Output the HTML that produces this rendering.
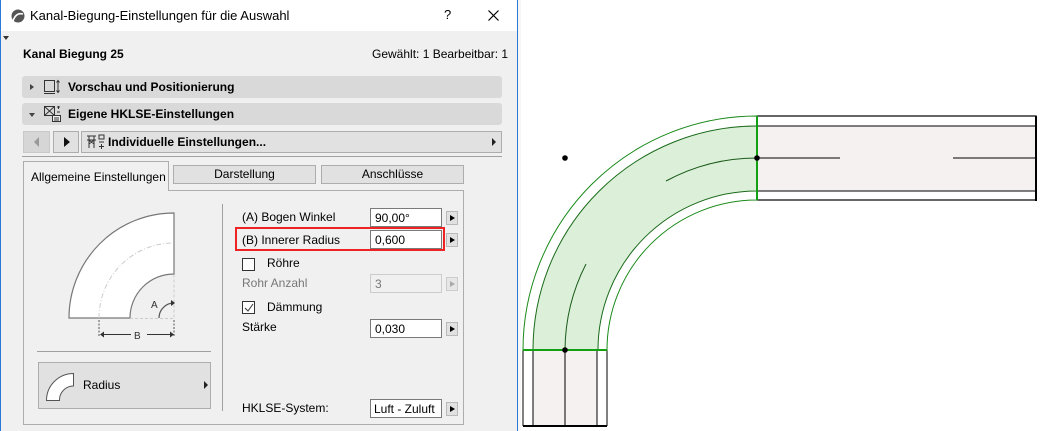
<!DOCTYPE html>
<html><head><meta charset="utf-8"><style>
*{box-sizing:border-box;margin:0;padding:0}
body{width:1041px;height:431px;overflow:hidden;background:#fff;font-family:"Liberation Sans",sans-serif;font-size:12px;color:#000;position:relative}
.a{position:absolute;white-space:nowrap}
.dlg{left:0;top:0;width:518px;height:431px;background:#f0f0f0;border-left:1px solid #2b79d6;border-right:1px solid #2b79d6}
.bar{background:#d9d9d9;border-radius:3px;height:22px;left:21px;width:480px;font-weight:bold}
.inp{background:#fff;border:1px solid #7a7a7a;height:19px;width:72px;left:369px;padding:2px 4px;font-size:12px}
.btn{left:445px;width:12px;height:14px;background:#e1e1e1;border:1px solid #adadadc0}
.btn:after{content:"";position:absolute;left:3px;top:3px;border-left:5px solid #000;border-top:3.5px solid transparent;border-bottom:3.5px solid transparent}
.lbl{left:241px}
.cb{left:241px;width:13px;height:13px;border:1px solid #333;background:#fff}
.tab{background:#e1e1e1;border:1px solid #adadad;height:19px;text-align:center;line-height:17px}
</style></head><body>
<div class="a dlg">
 <div class="a" style="left:0;top:0;width:516px;height:31px;background:#fff"></div>
 <svg class="a" style="left:9px;top:9px" width="16" height="14" viewBox="0 0 16 14"><circle cx="8" cy="7" r="6.5" fill="#555"/><path d="M3 12 Q6 3 13 5" stroke="#fff" stroke-width="1.6" fill="none"/></svg>
 <div class="a" style="left:29px;top:8px;font-size:13px;color:#000">Kanal-Biegung-Einstellungen für die Auswahl</div>
 <div class="a" style="left:443px;top:7px;font-size:13px">?</div>
 <svg class="a" style="left:487px;top:10px" width="11" height="11"><path d="M0.5 0.5L10.5 10.5M10.5 0.5L0.5 10.5" stroke="#000" stroke-width="1.2"/></svg>
 <div class="a" style="left:2px;top:36px;border-top:4px solid #333;border-left:3px solid transparent;border-right:3px solid transparent"></div>
 <div class="a" style="left:22px;top:47px;font-weight:bold">Kanal Biegung 25</div>
 <div class="a" style="left:371px;top:47px">Gewählt: 1 Bearbeitbar: 1</div>

 <div class="a bar" style="top:76px"><div class="a" style="left:8px;top:8px;border-left:4px solid #444;border-top:3px solid transparent;border-bottom:3px solid transparent"></div>
  <svg class="a" style="left:21px;top:3px" width="18" height="16"><rect x="1.5" y="1.5" width="10" height="11" fill="none" stroke="#333"/><path d="M1 14.5h11M15 2v11M13.5 3.5l1.5-2 1.5 2M13.5 11.5l1.5 2 1.5-2" stroke="#333" fill="none"/></svg>
  <div class="a" style="left:46px;top:4px">Vorschau und Positionierung</div></div>
 <div class="a bar" style="top:103px"><div class="a" style="left:7px;top:10px;border-top:4px solid #444;border-left:3px solid transparent;border-right:3px solid transparent"></div>
  <svg class="a" style="left:21px;top:2px" width="19" height="18"><rect x="1.5" y="1.5" width="10" height="9" fill="none" stroke="#333"/><path d="M1.5 1.5l10 9M11.5 1.5l-10 9" stroke="#333"/><rect x="9.5" y="10.5" width="8" height="6" fill="#f0f0f0" stroke="#333"/><path d="M11 13h5M11 15h5M14 2h3M15.5 1v3M14 7h3" stroke="#333"/></svg>
  <div class="a" style="left:46px;top:4px">Eigene HKLSE-Einstellungen</div></div>

 <div class="a" style="left:22px;top:131px;width:27px;height:22px;background:#d6d6d6;border:1px solid #c9c9c9"><div class="a" style="left:10px;top:5px;border-right:5px solid #999;border-top:5px solid transparent;border-bottom:5px solid transparent"></div></div>
 <div class="a" style="left:52px;top:131px;width:26px;height:22px;background:#e1e1e1;border:1px solid #adadad"><div class="a" style="left:10px;top:5px;border-left:6px solid #111;border-top:5px solid transparent;border-bottom:5px solid transparent"></div></div>
 <div class="a" style="left:80px;top:131px;width:421px;height:22px;background:#e1e1e1;border:1px solid #adadad;font-weight:bold">
  <svg class="a" style="left:4px;top:2px" width="20" height="17"><path d="M1 2h9M3 2v12M8 2v12M1 6h9M3 10l5-4M3 6l5 4M13 1h5v4h-5zM13 8h5M15.5 10v5M13 12.5h5" stroke="#333" fill="none"/></svg>
  <div class="a" style="left:26px;top:3px">Individuelle Einstellungen...</div>
  <div class="a" style="left:410px;top:6px;border-left:4px solid #222;border-top:4px solid transparent;border-bottom:4px solid transparent"></div></div>
 <div class="a" style="left:21px;top:156px;width:480px;height:1px;background:#a0a0a0"></div>

 <div class="a" style="left:22px;top:190px;width:441px;height:235px;border:1px solid #adadad"></div>
 <div class="a" style="left:22px;top:161px;width:146px;height:30px;background:#f0f0f0;border:1px solid #adadad;border-bottom:none;padding:8px 0 0 7px;font-size:12px">Allgemeine Einstellungen</div>
 <div class="a tab" style="left:172px;top:165px;width:143px">Darstellung</div>
 <div class="a tab" style="left:320px;top:165px;width:143px">Anschlüsse</div>

 <svg class="a" style="left:30px;top:200px" width="190" height="150">
  <path d="M38 118 A105 105 0 0 1 143 13 V74 A44 44 0 0 0 99 118 Z" fill="#fff" stroke="#777" stroke-width="1.2"/>
  <path d="M68 118 A75 75 0 0 1 140 43" fill="none" stroke="#ccc" stroke-dasharray="5 2 1 2"/>
  <path d="M99 118.5H143V74" fill="none" stroke="#ccc" stroke-dasharray="3 2"/>
  <path d="M128 118 A15 15 0 0 1 143 103" fill="none" stroke="#555" stroke-width="1.2"/>
  <path d="M140 100l4 3-4 3z" fill="#333"/>
  <text x="120" y="108" font-size="10" fill="#333" font-family="Liberation Sans">A</text>
  <path d="M68 120V136M143 120V136" stroke="#555" stroke-dasharray="2 1.5"/>
  <path d="M70 134.5H100M116 134.5H142" stroke="#333"/><path d="M69 134.5l4-3v6zM143 134.5l-4-3v6z" fill="#333"/>
  <text x="103" y="139" font-size="10" fill="#333" font-family="Liberation Sans">B</text>
 </svg>
 <div class="a" style="left:36px;top:351px;width:174px;height:1px;background:#a0a0a0"></div>
 <div class="a" style="left:37px;top:362px;width:173px;height:47px;background:#e1e1e1;border:1px solid #adadad">
  <svg class="a" style="left:6px;top:8px" width="32" height="32"><path d="M1.5 29.5 A27 27 0 0 1 28.5 2.5V15A14 14 0 0 0 14.5 29.5Z" fill="#fff" stroke="#555"/></svg>
  <div class="a" style="left:44px;top:15px">Radius</div>
  <div class="a" style="left:165px;top:18px;border-left:4px solid #222;border-top:4px solid transparent;border-bottom:4px solid transparent"></div></div>
 <div class="a" style="left:221px;top:204px;width:1px;height:207px;background:#a0a0a0"></div>

 <div class="a lbl" style="top:210px">(A) Bogen Winkel</div>
 <div class="a inp" style="top:208px">90,00°</div><div class="a btn" style="top:211px"></div>
 <div class="a" style="left:234px;top:227px;width:210px;height:24px;border:2px solid #e22"></div>
 <div class="a lbl" style="top:233px">(B) Innerer Radius</div>
 <div class="a inp" style="top:230px">0,600</div><div class="a btn" style="top:233px"></div>
 <div class="a cb" style="top:258px"></div><div class="a" style="left:266px;top:256px">Röhre</div>
 <div class="a lbl" style="top:276px;color:#777">Rohr Anzahl</div>
 <div class="a inp" style="top:274px;background:#f0f0f0;border-color:#ccc;color:#777">3</div><div class="a" style="left:445px;top:277px;width:12px;height:14px;background:#e6e6e6;border:1px solid #ccc"><div class="a" style="left:3px;top:3px;border-left:5px solid #aaa;border-top:3.5px solid transparent;border-bottom:3.5px solid transparent"></div></div>
 <div class="a cb" style="top:301px"><svg class="a" style="left:1px;top:1px" width="10" height="10"><path d="M1 5l3 3 5-7" stroke="#333" fill="none"/></svg></div><div class="a" style="left:266px;top:300px">Dämmung</div>
 <div class="a lbl" style="top:320px">Stärke</div>
 <div class="a inp" style="top:319px">0,030</div><div class="a btn" style="top:322px"></div>
 <div class="a lbl" style="top:401px">HKLSE-System:</div>
 <div class="a inp" style="top:399px;padding:2px 3px">Luft - Zuluft</div><div class="a btn" style="top:402px"></div>
</div>

<svg class="a" style="left:518px;top:0" width="523" height="431" viewBox="518 0 523 431">
 <rect x="518" y="0" width="3" height="431" fill="#f6f6f6"/>
 <rect x="757" y="116" width="279" height="84" fill="#fff" stroke="#000" stroke-width="1.2"/>
 <rect x="757" y="126" width="279" height="65" fill="#f4f1f0"/>
 <path d="M757 126H1036M757 191H1036" stroke="#000"/>
 <path d="M1036 116V201" stroke="#000" stroke-width="2"/>
 <path d="M757 158H840M953 158H1036" stroke="#000"/>
 <rect x="523" y="350" width="84" height="76" fill="#fff"/>
 <rect x="533" y="350" width="64" height="76" fill="#f4f1f0"/>
 <path d="M523 350V426M533 350V426M565 350V426M597 350V426M607 350V426" stroke="#000"/>
 <path d="M523 426H607" stroke="#000" stroke-width="2"/>
 <path d="M523 350A234 234 0 0 1 757 116V200A150 150 0 0 0 607 350Z" fill="#fff" stroke="#1a8a1a"/>
 <path d="M533 350A224 224 0 0 1 757 126V191A159 159 0 0 0 598 350Z" fill="#dcf0d9" stroke="#1a6a1a"/>
 <path d="M757 116V200M523 350H607" stroke="#13a013" stroke-width="2"/>
 <path d="M565 350A192 192 0 0 1 586 264" fill="none" stroke="#1a5a1a"/>
 <path d="M666 181A192 192 0 0 1 757 158" fill="none" stroke="#1a5a1a"/>
 <circle cx="565" cy="158" r="2.8"/><circle cx="757" cy="158" r="2.8"/><circle cx="565" cy="350" r="2.8"/>
</svg>
</body></html>
